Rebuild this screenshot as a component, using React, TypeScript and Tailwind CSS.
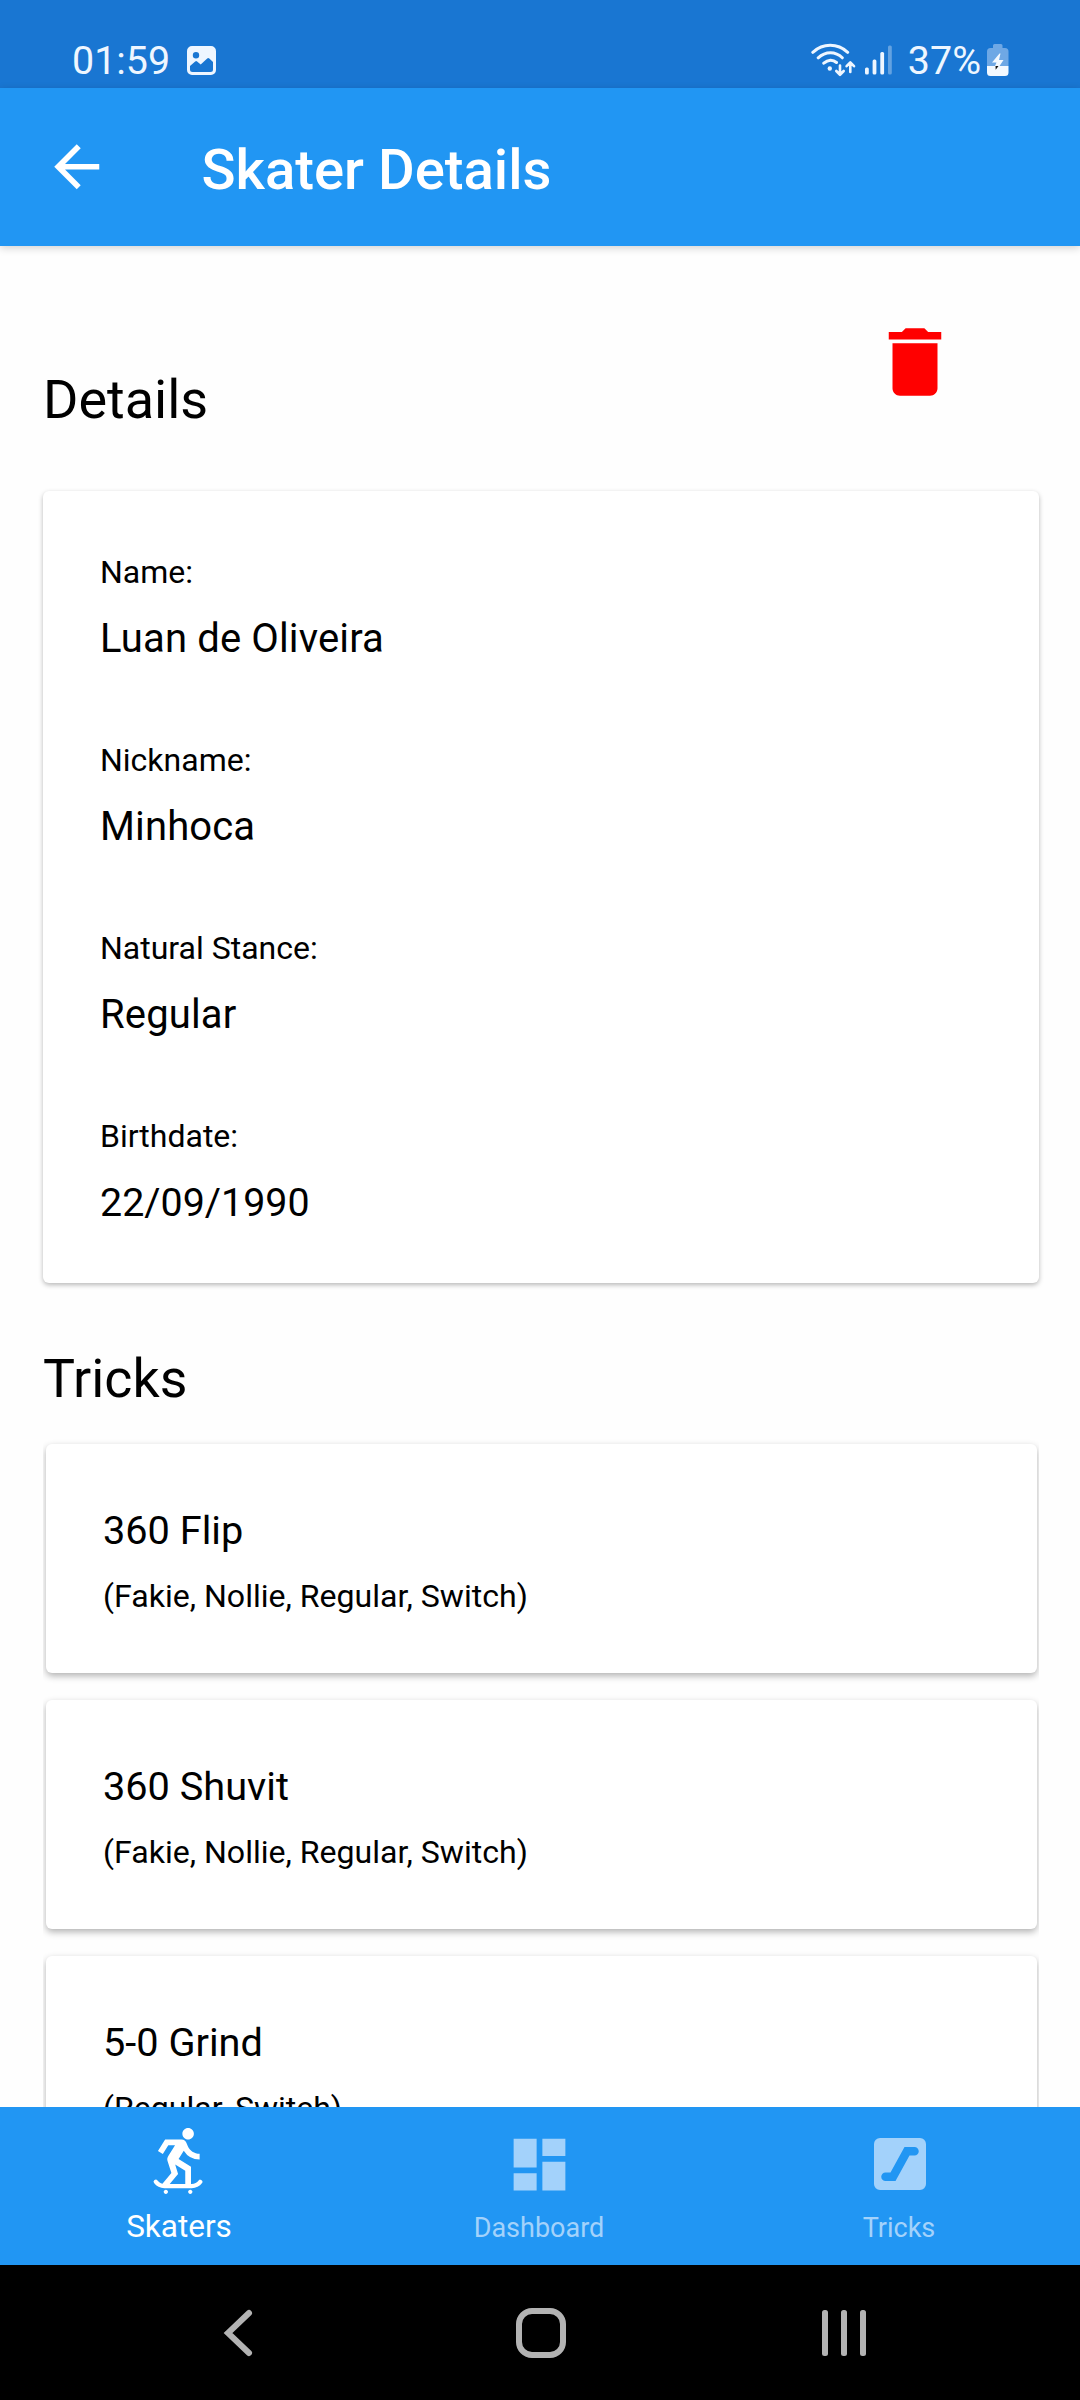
import type { ReactNode } from "react";
import { MdArrowBack, MdDashboard, MdDelete, MdSkateboarding } from "react-icons/md";

const details = [
  { label: "Name:", value: "Luan de Oliveira" },
  { label: "Nickname:", value: "Minhoca" },
  { label: "Natural Stance:", value: "Regular" },
  { label: "Birthdate:", value: "22/09/1990", numeric: true },
];

const tricks = [
  { name: "360 Flip", stances: "(Fakie, Nollie, Regular, Switch)" },
  { name: "360 Shuvit", stances: "(Fakie, Nollie, Regular, Switch)" },
  { name: "5-0 Grind", stances: "(Regular, Switch)" },
];

function PictureIcon() {
  return (
    <svg className="ml-[17px] h-[29px] w-[29px]" viewBox="0 0 29 29">
      <path
        fill="currentColor"
        fillRule="evenodd"
        d="M5 0h19a5 5 0 0 1 5 5v19a5 5 0 0 1-5 5H5a5 5 0 0 1-5-5V5a5 5 0 0 1 5-5zM9 6a3.200 3.200 0 1 0 0 6.400a3.200 3.200 0 0 0 0-6.400zM3 20V23.500a2.500 2.500 0 0 0 2.500 2.500h18a2.500 2.500 0 0 0 2.500-2.500V16l-3.700-3.400a1.500 1.500 0 0 0-2.100 0L13.700 18.500l-3.600-3a1.500 1.500 0 0 0-1.900 0z"
      />
    </svg>
  );
}

function WifiIcon() {
  return (
    <svg className="h-[36px] w-[46px]" viewBox="0 0 46 36" fill="none" stroke="currentColor" strokeWidth="3" strokeLinecap="round">
      <path d="M1.800 10.300C12 1 26.500 1 36.700 10.300M7.200 15.800C14.500 9 24.500 9 31.300 15.800M12.800 21.200C17 17.500 22 17.500 25.500 20.500" />
      <circle cx="18.800" cy="26.500" r="2.200" fill="currentColor" stroke="none" />
      <path d="M29 23.500v8.500M25.300 29l3.700 3.800 3.700-3.800M39.300 30v-9M35.600 24.200l3.700-3.800 3.700 3.800" strokeWidth="2.600" strokeLinejoin="round" />
    </svg>
  );
}

function SignalIcon() {
  return (
    <svg className="ml-[7px] h-[30px] w-[30px]" viewBox="0 0 30 30" fill="currentColor">
      <rect x="1" y="22.500" width="3.800" height="7" rx="1.500" />
      <rect x="8.600" y="14.500" width="3.800" height="15" rx="1.500" />
      <rect x="16.300" y="7" width="3.800" height="22.500" rx="1.500" />
      <rect x="24" y="0.500" width="3.800" height="29" rx="1.500" opacity="0.350" />
    </svg>
  );
}

function BatteryIcon() {
  return (
    <svg className="ml-[6px] h-[32px] w-[22px]" viewBox="0 0 22 32">
      <path d="M7.500 0h6.500a1.500 1.500 0 0 1 1.500 1.500V4H18a3.500 3.500 0 0 1 3.500 3.500V22H0V7.500A3.500 3.500 0 0 1 3.500 4H6V1.500A1.500 1.500 0 0 1 7.500 0z" fill="#6ea8e5" />
      <path d="M0 22h21.500v6.500A3.500 3.500 0 0 1 18 32H3.500A3.500 3.500 0 0 1 0 28.500z" fill="#f3f9ff" />
      <path d="M12.500 9.500L5 18.500h4.500L8 22h4.500l4-6h-4.500l1.500-6.500z" fill="#f3f9ff" />
      <path d="M8.500 22h3l-2.800 3.800z" fill="#111" />
    </svg>
  );
}

function SlopeIcon() {
  return (
    <svg className="h-[52px] w-[52px]" viewBox="0 0 52 52">
      <path
        fill="currentColor"
        fillRule="evenodd"
        d="M6 0h40a6 6 0 0 1 6 6v40a6 6 0 0 1-6 6H6a6 6 0 0 1-6-6V6a6 6 0 0 1 6-6zM30.500 9L16.500 34.500H11.500a4.200 4.200 0 0 0 0 8.500H21.500L35.500 17.500H40.500a4.200 4.200 0 0 0 0-8.500z"
      />
    </svg>
  );
}

function Tab({ icon, label, active = false }: { icon: ReactNode; label: string; active?: boolean }) {
  return (
    <div className={active ? "flex w-[360px] flex-col items-center text-white" : "flex w-[360px] flex-col items-center text-[#a3d2fb]"}>
      <div className="mt-[18px] mr-px flex h-[78px] items-center">{icon}</div>
      <span className={active ? "mt-[4px] mr-[2px] text-[31.500px] leading-[40px]" : "mt-[5px] mr-[2px] text-[27px] leading-[40px]"}>{label}</span>
    </div>
  );
}

export default function App() {
  return (
    <div className="flex h-[2400px] w-[1080px] flex-col overflow-hidden bg-[#fefefe] font-[Roboto,sans-serif] text-black">
      <div className="flex h-[88px] shrink-0 items-start bg-[#1976d2] pr-[71px] pl-[72px] text-[#eef6ff]">
        <div className="mt-[36px] flex h-[48px] flex-1 items-center">
          <span className="pt-[2px] text-[39.400px] leading-[48px]">01:59</span>
          <PictureIcon />
        </div>
        <div className="mt-[36px] flex h-[48px] items-center">
          <WifiIcon />
          <SignalIcon />
          <span className="ml-[14px] pt-[2px] text-[39.400px] leading-[48px]">37%</span>
          <BatteryIcon />
        </div>
      </div>

      <header className="relative z-10 flex h-[158px] shrink-0 items-center bg-[#2196f3] pl-[43px] text-white shadow-[0_2px_8px_rgba(0,0,0,0.180)]">
        <MdArrowBack className="h-[67.500px] w-[67.500px]" />
        <h1 className="ml-[91px] pt-[5px] text-[56.250px] leading-[66px] font-medium">Skater Details</h1>
      </header>

      <main className="flex h-[1861px] shrink-0 flex-col overflow-hidden pr-[41px] pl-[43px]">
        <div className="flex h-[245px] shrink-0 items-start justify-between pr-[79px]">
          <h2 className="mt-[122px] text-[54px] leading-[64px]">Details</h2>
          <MdDelete className="mt-[71px] h-[90px] w-[90px] text-[#ff0000]" />
        </div>

        <section className="flex h-[792px] shrink-0 flex-col rounded-[6px] bg-white px-[57px] pt-[60.500px] shadow-[0_2px_5px_rgba(0,0,0,0.280)]">
          {details.map((d) => (
            <div key={d.label} className="flex h-[188px] shrink-0 flex-col">
              <span className="text-[32px] leading-[40px]">{d.label}</span>
              <span className={d.numeric ? "mt-[23px] text-[39.400px] leading-[48px]" : "mt-[23px] text-[40px] leading-[48px] tracking-[0.140px]"}>{d.value}</span>
            </div>
          ))}
        </section>

        <h2 className="mt-[64px] shrink-0 text-[53.700px] leading-[64px]">Tricks</h2>

        <div className="flex flex-col gap-[27.500px] overflow-hidden pt-[33px] pr-[2px] pl-[3px]">
          {tricks.map((t) => (
            <article key={t.name} className="flex h-[228.500px] shrink-0 flex-col rounded-[6px] bg-white px-[57px] pt-[63px] shadow-[0_3px_7px_rgba(0,0,0,0.300)]">
              <span className="text-[39.700px] leading-[48px]">{t.name}</span>
              <span className="mt-[20.500px] text-[32.100px] leading-[40px]">{t.stances}</span>
            </article>
          ))}
        </div>
      </main>

      <nav className="flex h-[158px] shrink-0 bg-[#2196f3]">
        <Tab active icon={<MdSkateboarding className="mb-[10px] h-[69px] w-[69px]" />} label="Skaters" />
        <Tab icon={<MdDashboard className="h-[69px] w-[69px]" />} label="Dashboard" />
        <Tab icon={<SlopeIcon />} label="Tricks" />
      </nav>

      <div className="flex h-[135px] shrink-0 bg-black pl-[222px] text-[#b3b3b3]">
        <svg className="mt-[43px] h-[50px] w-[32px]" viewBox="0 0 32 50" fill="none" stroke="currentColor" strokeWidth="6" strokeLinecap="round">
          <path d="M27 5L6 25L27 45" />
        </svg>
        <svg className="mt-[43px] ml-[262px] h-[50px] w-[50px]" viewBox="0 0 50 50" fill="none" stroke="currentColor" strokeWidth="6">
          <rect x="3" y="3" width="44" height="44" rx="13" />
        </svg>
        <svg className="mt-[43px] ml-[256px] h-[50px] w-[44px]" viewBox="0 0 44 50" fill="currentColor">
          <rect x="0" y="2" width="6" height="46" rx="2.500" />
          <rect x="19" y="2" width="6" height="46" rx="2.500" />
          <rect x="38" y="2" width="6" height="46" rx="2.500" />
        </svg>
      </div>
    </div>
  );
}
